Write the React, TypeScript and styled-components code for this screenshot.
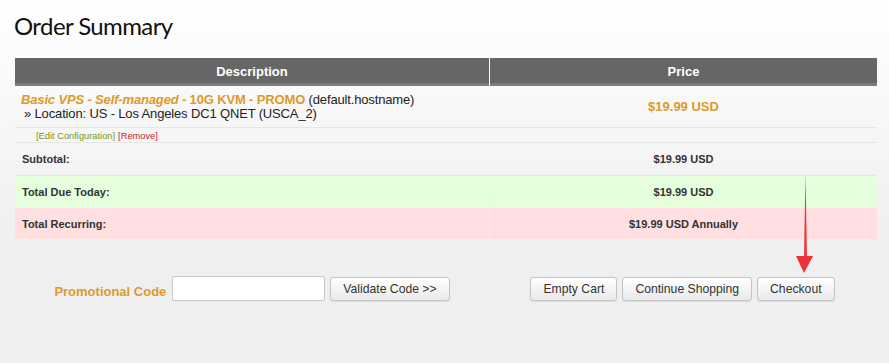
import React from "react";
import styled, { createGlobalStyle } from "styled-components";

const Global = createGlobalStyle`
  html, body { margin: 0; padding: 0; }
  body {
    min-height: 363px;
    background: linear-gradient(#ffffff 0px, #efefef 250px, #efefef 100%);
    background-repeat: no-repeat;
    background-color: #efefef;
    font-family: "Liberation Sans", Arial, sans-serif;
    color: #333;
  }
`;

const Page = styled.div`
  position: relative;
  width: 889px;
  height: 363px;
  padding: 9px 0 0 0;
  box-sizing: border-box;
`;

const Title = styled.h1`
  margin: 0 0 0 14px;
  font-family: Lato, "Open Sans", sans-serif;
  font-weight: 400;
  font-size: 24px;
  letter-spacing: -0.6px;
  line-height: 34px;
  color: #111;
`;

const Table = styled.div`
  margin: 15px 0 0 15px;
  width: 862px;
`;

const Row = styled.div<{ $bg?: string; $h: number; $line?: boolean }>`
  display: grid;
  grid-template-columns: 474px 387px;
  column-gap: 1px;
  height: ${(p) => p.$h}px;
  box-sizing: border-box;
  border-bottom: ${(p) => (p.$line ? "1px solid #e6e6e6" : "none")};
  > * { background: ${(p) => p.$bg || "transparent"}; }
`;

const HeadRow = styled.div`
  display: grid;
  grid-template-columns: 474px 387px;
  column-gap: 1px;
  height: 28px;
`;

const HeadCell = styled.div`
  background: #666666;
  border-bottom: 3px solid #7c7c7c;
  color: #fff;
  font-weight: 700;
  font-size: 13px;
  display: flex;
  align-items: center;
  justify-content: center;
  padding-top: 2px;
  box-sizing: border-box;
`;

const Cell = styled.div<{ $center?: boolean }>`
  display: flex;
  align-items: center;
  justify-content: ${(p) => (p.$center ? "center" : "flex-start")};
  padding-left: ${(p) => (p.$center ? 0 : 7)}px;
`;

const ProductCell = styled.div`
  padding: 7px 0 0 6px;
  font-size: 13px;
  line-height: 14px;
  color: #222;
  letter-spacing: -0.15px;
`;

const Group = styled.strong`
  color: #dd9a2b;
  font-weight: 700;
`;

const Location = styled.div`
  padding-left: 3px;
`;

const Price = styled.span`
  color: #dd9a2b;
  font-weight: 700;
  font-size: 13px;
`;

const EditCell = styled.div`
  padding-left: 21px;
  font-size: 9.3px;
  display: flex;
  align-items: center;
  gap: 3px;
  padding-top: 1px;
`;

const EditLink = styled.span<{ $color: string }>`
  color: ${(p) => p.$color};
`;

const Label = styled.span`
  font-weight: 700;
  font-size: 11px;
  color: #333;
`;

const Bottom = styled.div`
  display: grid;
  grid-template-columns: 474px 387px;
  margin-top: 37px;
  margin-left: 15px;
`;

const Controls = styled.div`
  display: flex;
  align-items: center;
  justify-content: center;
  gap: 5px;
`;

const PromoLabel = styled.label`
  color: #dd9a2b;
  font-weight: 700;
  font-size: 13px;
  padding-top: 5px;
  margin-right: 1px;
`;

const Input = styled.input`
  width: 153px;
  height: 25px;
  box-sizing: border-box;
  border: 1px solid #c8c8c8;
  border-radius: 2px;
  background: #fff;
  margin: 0;
`;

const Button = styled.button`
  height: 24px;
  padding: 0 12px;
  font-family: "Liberation Sans", Arial, sans-serif;
  font-size: 12.2px;
  color: #333;
  background: linear-gradient(#ffffff, #e9e9e9);
  border: 1px solid #c4c4c4;
  border-radius: 3px;
  box-shadow: 0 1px 1px rgba(0, 0, 0, 0.08);
  margin: 0;
`;

const Arrow = styled.svg`
  position: absolute;
  left: 790px;
  top: 170px;
`;

export default function App() {
  return (
    <>
      <Global />
      <Page>
        <Title>Order Summary</Title>
        <Table>
          <HeadRow>
            <HeadCell>Description</HeadCell>
            <HeadCell>Price</HeadCell>
          </HeadRow>
          <Row $h={42} $line>
            <ProductCell>
              <div>
                <Group>
                  <em>Basic VPS - Self-managed</em> - 10G KVM - PROMO
                </Group>{" "}
                (default.hostname)
              </div>
              <Location>» Location: US - Los Angeles DC1 QNET (USCA_2)</Location>
            </ProductCell>
            <Cell $center>
              <Price>$19.99 USD</Price>
            </Cell>
          </Row>
          <Row $h={15} $line>
            <EditCell>
              <EditLink $color="#779922">[Edit Configuration]</EditLink>
              <EditLink $color="#cc2222">[Remove]</EditLink>
            </EditCell>
            <Cell />
          </Row>
          <Row $h={33} $line>
            <Cell>
              <Label>Subtotal:</Label>
            </Cell>
            <Cell $center>
              <Label>$19.99 USD</Label>
            </Cell>
          </Row>
          <Row $h={32} $bg="#e5ffdc">
            <Cell>
              <Label>Total Due Today:</Label>
            </Cell>
            <Cell $center>
              <Label>$19.99 USD</Label>
            </Cell>
          </Row>
          <Row $h={31} $bg="#ffdfdf">
            <Cell>
              <Label>Total Recurring:</Label>
            </Cell>
            <Cell $center>
              <Label>$19.99 USD Annually</Label>
            </Cell>
          </Row>
        </Table>
        <Bottom>
          <Controls>
            <PromoLabel>Promotional Code</PromoLabel>
            <Input type="text" />
            <Button>Validate Code &gt;&gt;</Button>
          </Controls>
          <Controls>
            <Button>Empty Cart</Button>
            <Button>Continue Shopping</Button>
            <Button>Checkout</Button>
          </Controls>
        </Bottom>
        <Arrow width="30" height="106" viewBox="0 0 30 106">
          <polygon points="15.5,4 17,88 14,88" fill="#ee3338" />
          <polygon points="6,86 23,86 14,103" fill="#ee3338" />
        </Arrow>
      </Page>
    </>
  );
}
